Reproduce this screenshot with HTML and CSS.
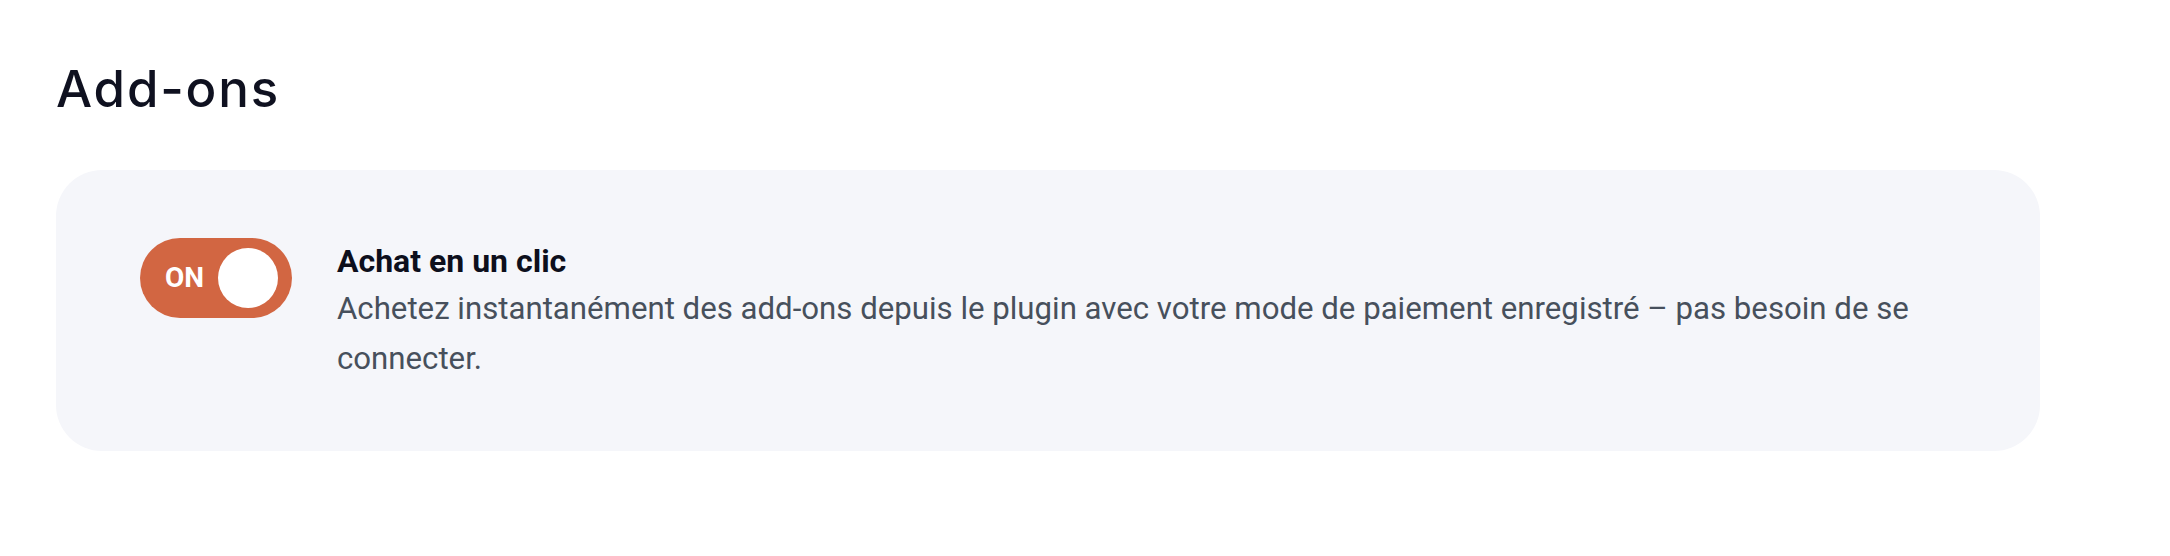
FILE: index.html
```html
<!DOCTYPE html>
<html lang="fr">
<head>
<meta charset="utf-8">
<title>Add-ons</title>
<link rel="stylesheet" href="styles.css">
</head>
<body>
<main class="page">
  <h2 class="page-title">Add-ons</h2>
  <section class="addon-card">
    <div class="toggle is-on" role="switch" aria-checked="true">
      <span class="toggle-label">ON</span>
      <span class="toggle-knob"></span>
    </div>
    <div class="addon-text">
      <h3 class="addon-title">Achat en un clic</h3>
      <p class="addon-desc">Achetez instantanément des add-ons depuis le plugin avec votre mode de paiement enregistré – pas besoin de se connecter.</p>
    </div>
  </section>
</main>
</body>
</html>
```
FILE: styles.css
```css
* { box-sizing: border-box; }
html, body { margin: 0; padding: 0; background: #ffffff; }
body { font-family: Roboto, "Liberation Sans", Arial, sans-serif; }

.page {
  padding: 58px 130px 0 56px;
}

.page-title {
  margin: 0 0 51px 0;
  font-family: Inter, "Open Sans", sans-serif;
  font-weight: 500;
  font-size: 51px;
  line-height: 61px;
  letter-spacing: 1.8px;
  color: #0f1120;
}

.addon-card {
  display: flex;
  align-items: flex-start;
  gap: 45px;
  background: #f5f6fa;
  border-radius: 46px;
  padding: 68px 64px 68px 84px;
}

.toggle {
  flex: 0 0 auto;
  width: 152px;
  height: 80px;
  border-radius: 40px;
  background: #d26642;
  display: flex;
  align-items: center;
  justify-content: space-between;
  padding: 0 14px 0 25px;
}

.toggle-label {
  font-family: Roboto, sans-serif;
  font-weight: 700;
  font-size: 28px;
  color: #ffffff;
  line-height: 1;
}

.toggle-knob {
  width: 60px;
  height: 60px;
  border-radius: 50%;
  background: #ffffff;
}

.addon-text { flex: 1 1 auto; min-width: 0; }

.addon-title {
  margin: 0;
  font-family: Roboto, sans-serif;
  font-weight: 700;
  font-size: 32px;
  line-height: 46px;
  color: #0d0f1c;
}

.addon-desc {
  margin: 0;
  font-family: Roboto, sans-serif;
  font-weight: 400;
  font-size: 31.2px;
  line-height: 49.5px;
  color: #47505c;
}
```
